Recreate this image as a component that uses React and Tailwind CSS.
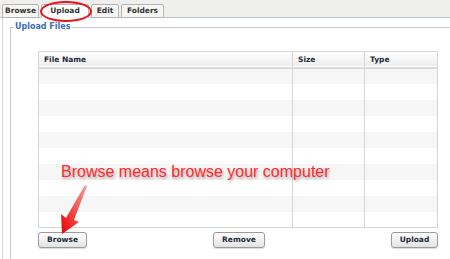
import React from "react";

const tabs = [
  { label: "Browse", w: "w-[37px]" },
  { label: "Upload", w: "w-[48px]" },
  { label: "Edit", w: "w-[28px]" },
  { label: "Folders", w: "w-[43px]" },
];
const rows = Array.from({ length: 10 }, (_, i) => i);

function Button({ label, className }) {
  return (
    <button
      className={`h-[16px] rounded-[3px] border border-[#9a9a9a] bg-gradient-to-b from-white to-[#e2e2e2] text-[7.5px] font-bold text-[#1c2a3c] shadow-[0_1px_1px_rgba(0,0,0,0.15)] ${className}`}
    >
      {label}
    </button>
  );
}

export default function App() {
  return (
    <div className="relative w-[450px] h-[259px] overflow-hidden bg-white font-['DejaVu_Sans',Verdana,sans-serif]">
      {/* tab bar */}
      <div className="flex h-[18px] items-end gap-[2px] border-b border-[#b7c6cf] bg-[#efefed] pl-[2px]">
        {tabs.map((t) => (
          <div
            key={t.label}
            className={`-mb-px flex h-[14px] items-center justify-center rounded-t-[2px] border border-[#b4b4b4] text-[7.5px] font-bold text-[#333] ${t.w} ${
              t.label === "Upload" ? "border-b-white bg-white" : "bg-[#f6f6f4]"
            }`}
          >
            {t.label}
          </div>
        ))}
      </div>

      {/* panel */}
      <div className="ml-[2px] h-[241px] border-l border-[#d4d4d4] pl-[7px] pt-[4px]">
        <fieldset className="h-[240px] border-l border-t border-[#c8c8c8]">
          <legend className="ml-[3px] px-[1px] text-[8px] font-bold leading-[10px] text-[#3b6db4]">
            Upload Files
          </legend>

          <div className="ml-[27px] mt-[19px] w-[400px]">
            <table className="w-full border-collapse border border-[#d6d6d6] text-[7.5px]">
              <thead>
                <tr className="h-[16px] bg-gradient-to-b from-white to-[#ededed] border-b-2 border-[#dadada]">
                  <th className="w-[254px] border-r border-[#d6d6d6] pl-[5px] text-left font-bold text-[#1c2a3c]">
                    File Name
                  </th>
                  <th className="w-[72px] border-r border-[#d6d6d6] pl-[5px] text-left font-bold text-[#1c2a3c]">
                    Size
                  </th>
                  <th className="pl-[5px] text-left font-bold text-[#1c2a3c]">Type</th>
                </tr>
              </thead>
              <tbody>
                {rows.map((r) => (
                  <tr key={r} className={`h-[16px] ${r % 2 === 0 ? "bg-[#f6f6f6]" : "bg-white"}`}>
                    <td className="border-r border-[#d6d6d6]"></td>
                    <td className="border-r border-[#d6d6d6]"></td>
                    <td></td>
                  </tr>
                ))}
              </tbody>
            </table>

            <div className="mt-[4px] flex items-center">
              <Button label="Browse" className="w-[49px]" />
              <Button label="Remove" className="ml-[126px] w-[52px]" />
              <Button label="Upload" className="ml-auto w-[47px]" />
            </div>
          </div>
        </fieldset>
      </div>

      {/* annotations */}
      <div className="absolute left-[40px] top-[1px] h-[21px] w-[52px] rounded-[50%] border-2 border-[#e8141b]"></div>

      <div className="absolute left-[61px] top-[162px] font-['Liberation_Sans',Arial,sans-serif] text-[16px] leading-[19px] text-[#ff2b2b] [text-shadow:1px_2px_3px_rgba(0,0,0,0.35)]">
        Browse means browse your computer
      </div>

      <svg className="absolute left-[55px] top-[183px]" width="40" height="54" viewBox="0 0 40 54">
        <defs>
          <linearGradient id="ar" x1="1" y1="0" x2="0" y2="1">
            <stop offset="0" stopColor="#ff9a9a" />
            <stop offset="1" stopColor="#e80000" />
          </linearGradient>
        </defs>
        <polygon points="30,2 32,3 19,37 24,39 7,51 6,31 11,35" fill="url(#ar)" />
      </svg>
    </div>
  );
}
